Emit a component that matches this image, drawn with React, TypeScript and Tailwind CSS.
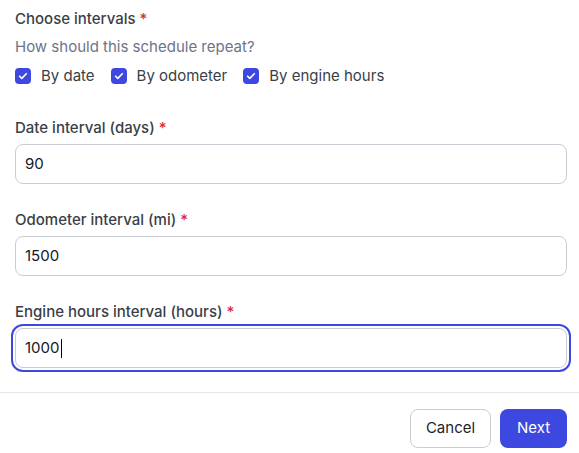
import React from "react";

function Check() {
  return (
    <span className="flex h-4 w-4 shrink-0 items-center justify-center rounded-[4px] bg-[#3d48e0]">
      <svg viewBox="0 0 16 16" className="h-3 w-3" fill="none">
        <path d="M3.5 8.3l2.9 2.9 6-6.2" stroke="white" strokeWidth="2.2" strokeLinecap="round" strokeLinejoin="round" />
      </svg>
    </span>
  );
}

function Field({ label, value, focused }: { label: string; value: string; focused?: boolean }) {
  return (
    <div className="flex flex-col gap-[7px]">
      <div className="text-[15px] leading-[18px] font-medium text-[#3a3f47]">
        {label} <span className="text-[#d92d3a]">*</span>
      </div>
      <div
        className={
          "flex h-10 items-center rounded-lg border border-[#c9ccd3] bg-white px-[9px] text-[15px] text-[#16191d] " +
          (focused ? "outline-2 outline-offset-2 outline-[#3d48e0]" : "")
        }
      >
        {value}
        {focused && <span className="ml-px inline-block h-[19px] w-px bg-black" />}
      </div>
    </div>
  );
}

export default function App() {
  return (
    <div className="h-[453px] w-[579px] bg-white" style={{ fontFamily: "Inter, 'Noto Sans', sans-serif" }}>
      <div className="pl-[15px] pr-[12px] pt-[10px]">
        <div className="text-[15px] leading-[18px] font-medium text-[#3a3f47]">
          Choose intervals <span className="text-[#d92d3a]">*</span>
        </div>
        <div className="mt-[10px] text-[15px] leading-[18px] text-[#6b7588]">How should this schedule repeat?</div>
        <div className="mt-[11px] flex items-center gap-[10px] text-[15px] leading-[18px] text-[#3a3f47]">
          <label className="flex items-center gap-[10px]"><Check />By date</label>
          <label className="ml-[6px] flex items-center gap-[10px]"><Check />By odometer</label>
          <label className="ml-[6px] flex items-center gap-[10px]"><Check />By engine hours</label>
        </div>
        <div className="mt-[34px] flex flex-col gap-[27px]">
          <Field label="Date interval (days)" value="90" />
          <Field label="Odometer interval (mi)" value="1500" />
          <Field label="Engine hours interval (hours)" value="1000" focused />
        </div>
      </div>
      <div className="mt-6 border-t border-[#e6e7ea]" />
      <div className="flex justify-end gap-[9px] px-[12px] pt-[16px]">
        <button className="h-[39px] w-[81px] rounded-lg border border-[#c9ccd3] bg-white text-[15px] text-[#1f2328]">Cancel</button>
        <button className="h-[39px] w-[67px] rounded-lg bg-[#3d48e0] text-[15px] text-white">Next</button>
      </div>
    </div>
  );
}
